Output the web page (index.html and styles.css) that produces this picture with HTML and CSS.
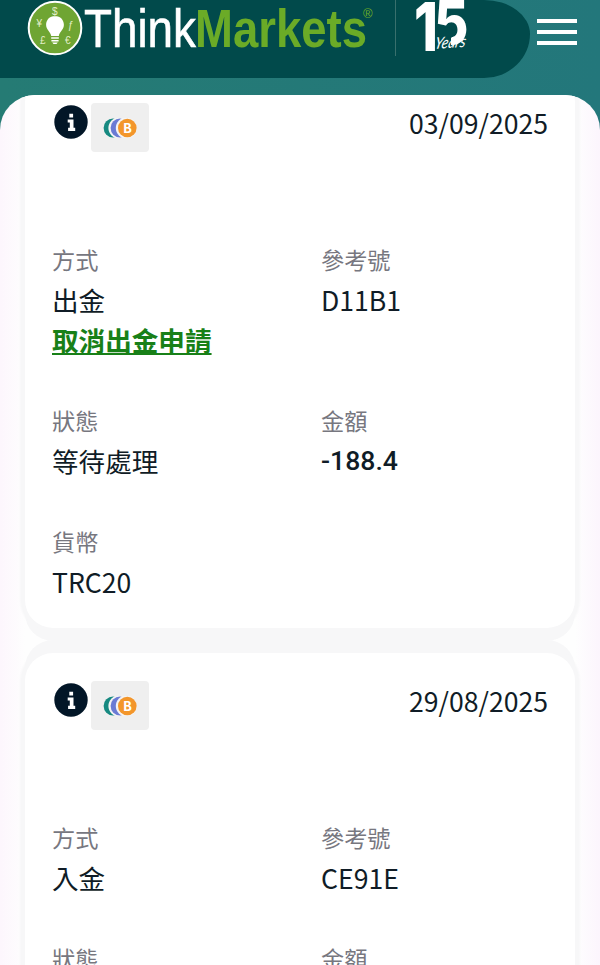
FILE: index.html
```html
<!doctype html>
<html lang="zh-Hant">
  <head>
    <meta charset="UTF-8" />
    <title>ThinkMarkets</title>
    <link rel="stylesheet" href="styles.css">
  </head>
  <body>
    <svg class="defs" width="0" height="0" aria-hidden="true">
      <symbol id="icon-info" viewBox="0 0 34 34">
        <circle cx="17" cy="17" r="16.7" fill="#021627" />
        <path d="M15.3 8.7h3.8v3.7h-3.8zM13.7 14.4h5.8v8.4h1.7v3.1h-7.1v-3.1h1.7v-5.3h-2.1z" fill="#fff" />
      </symbol>
      <symbol id="icon-crypto" viewBox="0 0 34 20">
        <circle cx="10" cy="10" r="9.4" fill="#168980" />
        <circle cx="16" cy="10" r="10.6" fill="#f4f4f4" />
        <circle cx="17" cy="10" r="9.4" fill="#6b7bd4" />
        <circle cx="23.4" cy="10" r="10.6" fill="#f4f4f4" />
        <circle cx="24.3" cy="10" r="9.3" fill="#f3962b" />
        <text x="24.5" y="14.7" text-anchor="middle" class="coin">B</text>
      </symbol>
    </svg>
    <header class="header">
      <div class="brand">
        <svg class="logo" width="360" height="60" viewBox="20 0 360 60">
          <circle cx="55" cy="28" r="26.3" fill="#6fa533" stroke="#fff" stroke-width="2" />
          <path d="M55 16c-5.5 0-8.9 4-8.9 8.8 0 5 4.2 6.6 5.1 11.2h7.6c.9-4.6 5.1-6.2 5.1-11.2 0-4.8-3.4-8.8-8.9-8.8zM51.2 37.2h7.6v1.6h-7.6zM51.4 39.9h7.2v1.5h-7.2zM52.2 42.4h5.6l-1.3 1.7h-3z" fill="#fff" />
          <g class="currency">
            <text x="52" y="14.5">$</text>
            <text x="36.5" y="26.5">¥</text>
            <text x="40" y="44">£</text>
            <text x="67.5" y="28.5" font-style="italic">ƒ</text>
            <text x="65" y="44">€</text>
          </g>
          <text class="think" x="84" y="47" textLength="112" lengthAdjust="spacingAndGlyphs">Think</text>
          <text class="markets" x="195" y="47" textLength="172" lengthAdjust="spacingAndGlyphs">Markets</text>
          <text class="reg" x="363" y="18">®</text>
        </svg>
        <svg class="anniversary" width="56" height="62" viewBox="414 0 56 62">
          <text class="fifteen" transform="translate(414 51) scale(.8 1)">1</text>
          <text class="fifteen five" transform="translate(434 44) scale(.88 1)">5</text>
          <path d="M435.5 28h8.500l4-1 6 4v4l-3 3v12h-15.500z" fill="#014a4b" />
          <text class="years" transform="translate(434 49) rotate(-4) skewX(-16)" textLength="31" lengthAdjust="spacingAndGlyphs">Years</text>
        </svg>
      </div>
      <button class="menu" type="button" aria-label="menu">
        <span></span>
        <span></span>
        <span></span>
      </button>
    </header>
    <main class="panel">
      <section class="card">
        <div class="card-head">
          <svg class="info" width="34" height="34"><use href="#icon-info" /></svg>
          <div class="method"><svg width="34" height="20"><use href="#icon-crypto" /></svg></div>
          <time>03/09/2025</time>
        </div>
        <dl class="fields">
          <div class="field">
            <dt>方式</dt>
            <dd>出金</dd>
            <dd><a class="cancel" href="#">取消出金申請</a></dd>
          </div>
          <div class="field">
            <dt>參考號</dt>
            <dd>D11B1</dd>
          </div>
          <div class="field">
            <dt>狀態</dt>
            <dd>等待處理</dd>
          </div>
          <div class="field">
            <dt>金額</dt>
            <dd class="amount">-188.4</dd>
          </div>
          <div class="field">
            <dt>貨幣</dt>
            <dd>TRC20</dd>
          </div>
        </dl>
      </section>
      <section class="card">
        <div class="card-head">
          <svg class="info" width="34" height="34"><use href="#icon-info" /></svg>
          <div class="method"><svg width="34" height="20"><use href="#icon-crypto" /></svg></div>
          <time>29/08/2025</time>
        </div>
        <dl class="fields">
          <div class="field">
            <dt>方式</dt>
            <dd>入金</dd>
          </div>
          <div class="field">
            <dt>參考號</dt>
            <dd>CE91E</dd>
          </div>
          <div class="field">
            <dt>狀態</dt>
          </div>
          <div class="field">
            <dt>金額</dt>
          </div>
        </dl>
      </section>
    </main>
  </body>
</html>
```
FILE: styles.css
```css
* {
  margin: 0;
  padding: 0;
  box-sizing: border-box;
}

body {
  display: flex;
  flex-direction: column;
  height: 965px;
  overflow: hidden;
  background: linear-gradient(90deg, #257b74, #23777b) top / 100% 150px no-repeat;
  font-family: "Noto Sans CJK TC", "Noto Sans", sans-serif;
  font-size: 26.6px;
  color: #101c26;
}

.defs {
  position: absolute;
}

.header {
  display: flex;
  flex: none;
  height: 95px;
}

.brand {
  display: flex;
  width: 530px;
  height: 78px;
  padding-left: 20px;
  background: #014a4b;
  border-bottom-right-radius: 46px 44px;
  border-top-right-radius: 46px 34px;
}

.brand::after {
  content: "";
  order: 1;
  width: 1px;
  height: 56px;
  margin-left: 15px;
  background: #39706d;
}

.logo {
  flex: none;
}

.anniversary {
  flex: none;
  order: 2;
  margin-left: 18px;
}

.currency {
  font: 10px "Liberation Sans", Arial, sans-serif;
  fill: #e4efc8;
}

.think,
.markets {
  font: 53px "Liberation Sans", Arial, sans-serif;
  fill: #fff;
}

.think {
  stroke: #fff;
  stroke-width: 0.6;
}

.markets {
  font-weight: bold;
  fill: #6bab27;
}

.reg {
  font: 13px "Liberation Sans", Arial, sans-serif;
  fill: #6bab27;
}

.fifteen {
  font: 800 68px Inter, sans-serif;
  fill: #fff;
}

.five {
  font-size: 60px;
}

.years {
  font: italic 400 16px Lato, sans-serif;
  fill: #fff;
}

.coin {
  font: bold 14px "Liberation Mono", monospace;
  fill: #fff;
}

.menu {
  display: flex;
  flex-direction: column;
  gap: 7px;
  width: 40px;
  height: 27px;
  margin: 19px 0 0 7px;
  background: none;
  border: 0;
}

.menu span {
  width: 40px;
  height: 4px;
  background: #fff;
}

.panel {
  display: flex;
  flex: 1;
  flex-direction: column;
  gap: 25px;
  min-height: 0;
  padding: 0 25px;
  overflow: hidden;
  background: linear-gradient(90deg, #fdf6fd, #fefefe 25px, #fefefe 575px, #fcf5fd);
  border-radius: 35px 35px 0 0;
}

.card {
  flex: none;
  height: 553px;
  padding: 28px 27px 0;
  background: #fff;
  border-radius: 28px;
  box-shadow: 0 0 2px 5px #f7f7f8, 0 13px 0 #f7f7f8, 0 -13px 0 #f7f7f8;
}

.card:first-child {
  margin-top: -20px;
}

.card-head {
  display: flex;
  height: 49px;
}

.info {
  flex: none;
  margin: 2px 3px 0 2px;
}

.method {
  display: flex;
  align-items: center;
  width: 58px;
  height: 49px;
  padding-left: 12px;
  background: #efefef;
  border-radius: 4px;
}

time {
  margin-left: auto;
  line-height: 40px;
}

.fields {
  display: grid;
  grid-template-columns: 269px 1fr;
  row-gap: 39px;
  padding-top: 86px;
}

dt {
  font-size: 23.2px;
  line-height: 42px;
  color: #77777f;
}

dd {
  line-height: 40px;
}

.amount {
  font-family: Roboto, sans-serif;
  font-weight: 500;
}

.cancel {
  font-weight: bold;
  color: #188018;
}
```
